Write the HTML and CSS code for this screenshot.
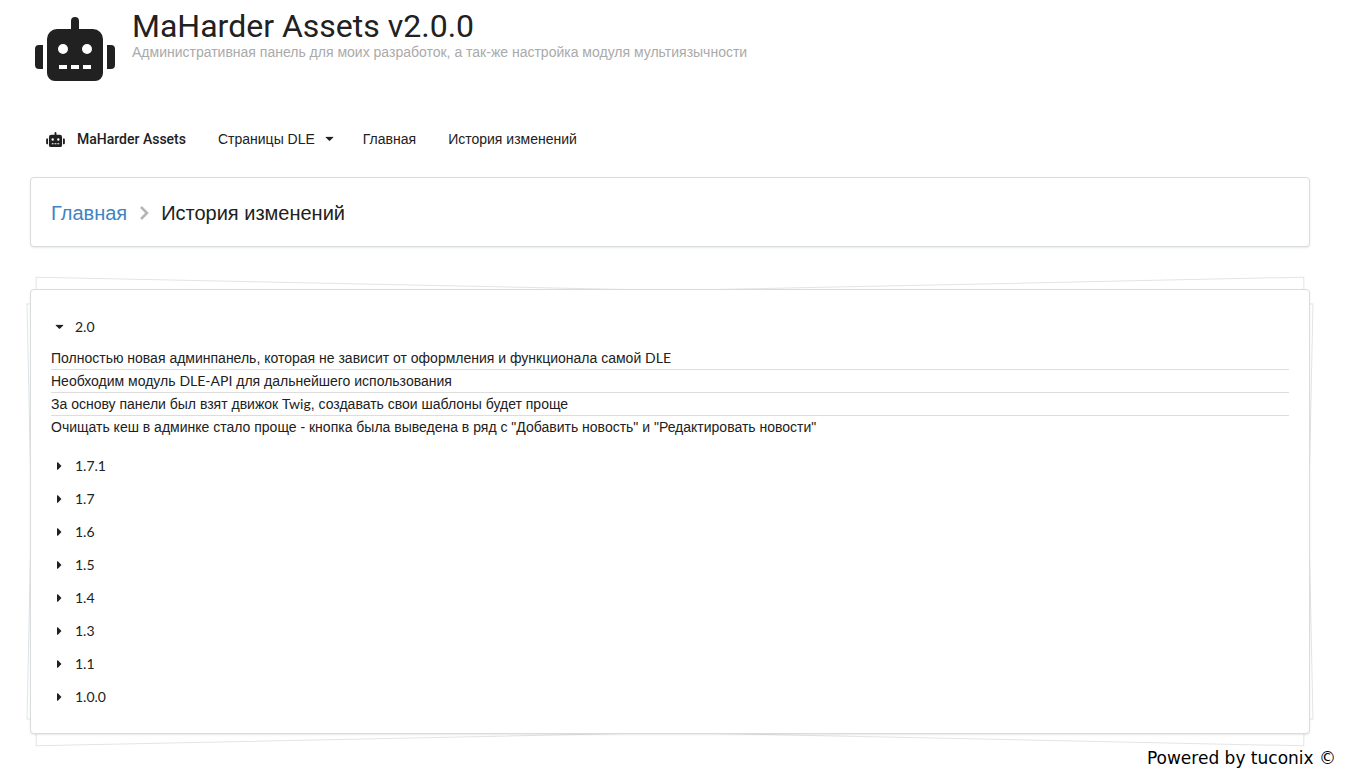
FILE: index.html
```html
<!DOCTYPE html>
<html lang="ru">
  <head>
    <meta charset="UTF-8" />
    <meta name="viewport" content="width=device-width, initial-scale=1.0" />
    <title>MaHarder Assets v2.0.0</title>
    <link rel="stylesheet" href="styles.css">
  </head>
  <body>
    <!-- icons used on the page -->
    <svg class="sprite" aria-hidden="true">
      <symbol id="robot" viewBox="0 0 640 512">
        <path d="M32 224H64V416H32A32 32 0 0 1 0 384V256A32 32 0 0 1 32 224Zm512-48V448a64 64 0 0 1-64 64H160a64 64 0 0 1-64-64V176a80 80 0 0 1 80-80H288V32a32 32 0 0 1 64 0V96H464A80 80 0 0 1 544 176ZM264 256a40 40 0 1 0-40 40A40 40 0 0 0 264 256Zm-8 128H192v32h64Zm96 0H288v32h64ZM456 256a40 40 0 1 0-40 40A40 40 0 0 0 456 256Zm-8 128H384v32h64ZM640 256V384a32 32 0 0 1-32 32H576V224h32A32 32 0 0 1 640 256Z"/>
      </symbol>
      <symbol id="caret" viewBox="0 0 192 512">
        <path d="M0 384.7V127.3c0-17.8 21.5-26.7 34.1-14.1l128.7 128.7c7.8 7.8 7.8 20.5 0 28.3L34.1 398.8C21.5 411.4 0 402.5 0 384.7z"/>
      </symbol>
    </svg>

    <header class="page-header">
      <svg class="logo"><use href="#robot"/></svg>
      <div>
        <h1>MaHarder Assets v2.0.0</h1>
        <p class="sub-header">Административная панель для моих разработок, а так-же настройка модуля мультиязычности</p>
      </div>
    </header>

    <nav class="menu">
      <a class="item brand" href="#"><svg class="brand-icon"><use href="#robot"/></svg>MaHarder Assets</a>
      <button class="item dropdown" type="button">Страницы DLE<svg class="caret down"><use href="#caret"/></svg></button>
      <a class="item" href="#">Главная</a>
      <a class="item" href="#">История изменений</a>
    </nav>

    <div class="segment breadcrumb">
      <a href="#">Главная</a>
      <svg class="divider" viewBox="0 0 10 16"><path d="M2 2l6 6-6 6"/></svg>
      <span>История изменений</span>
    </div>

    <main class="segment piled">
      <details open>
        <summary><svg class="caret"><use href="#caret"/></svg>2.0</summary>
        <ul class="changes">
          <li>Полностью новая админпанель, которая не зависит от оформления и функционала самой <span class="latin">DLE</span></li>
          <li>Необходим модуль <span class="latin">DLE-API</span> для дальнейшего использования</li>
          <li>За основу панели был взят движок <span class="latin">Twig</span>, создавать свои шаблоны будет проще</li>
          <li>Очищать кеш в админке стало проще - кнопка была выведена в ряд с "Добавить новость" и "Редактировать новости"</li>
        </ul>
      </details>
      <details><summary><svg class="caret"><use href="#caret"/></svg>1.7.1</summary></details>
      <details><summary><svg class="caret"><use href="#caret"/></svg>1.7</summary></details>
      <details><summary><svg class="caret"><use href="#caret"/></svg>1.6</summary></details>
      <details><summary><svg class="caret"><use href="#caret"/></svg>1.5</summary></details>
      <details><summary><svg class="caret"><use href="#caret"/></svg>1.4</summary></details>
      <details><summary><svg class="caret"><use href="#caret"/></svg>1.3</summary></details>
      <details><summary><svg class="caret"><use href="#caret"/></svg>1.1</summary></details>
      <details><summary><svg class="caret"><use href="#caret"/></svg>1.0.0</summary></details>
    </main>

    <footer class="footer">Powered by tuconix ©</footer>
  </body>
</html>
```
FILE: styles.css
```css
/* basic styling */
* {
  margin: 0;
  padding: 0;
  box-sizing: border-box;
}
body {
  padding: 0 36px 0 30px;
  font-family: "Liberation Sans", Arial, sans-serif;
  font-size: 14px;
  line-height: 20px;
  background-color: #ffffff;
  color: #212121;
}
a {
  color: #4183c4;
  text-decoration: none;
}
svg {
  flex: none;
  fill: currentColor;
}
.sprite {
  display: none;
}

/* Logo and title */
.page-header {
  display: flex;
  gap: 17px;
  padding: 9px 5px 0;
}
.logo {
  width: 80px;
  height: 64px;
  margin-top: 8px;
}
.page-header h1 {
  font-family: Roboto, sans-serif;
  font-size: 32px;
  font-weight: 400;
  line-height: 34px;
}
.sub-header {
  line-height: 18px;
  color: #aaaaaa;
}

/* Main menu */
.menu {
  display: flex;
  align-items: center;
  margin: 38px 0 18px;
}
.item {
  display: flex;
  align-items: center;
  padding: 10px 16px;
  border: none;
  background: none;
  font: inherit;
  color: #212121;
  cursor: pointer;
}
.item:hover {
  background-color: #f5f5f5;
}
.brand {
  gap: 12px;
  font-family: Roboto, sans-serif;
  font-weight: 500;
}
.brand-icon {
  width: 19px;
  height: 15px;
}

/* Carets of the dropdown and the accordion */
.caret {
  width: 5px;
  height: 14px;
}
.dropdown {
  gap: 12px;
  padding-right: 15px;
}
.caret.down,
details[open] .caret {
  transform: rotate(90deg);
}

/* White boxes */
.segment {
  padding: 20px;
  border: 1px solid #d9dcde;
  border-radius: 4px;
  background-color: #ffffff;
  box-shadow: 0 1px 2px rgba(34, 36, 38, 0.1);
}
.breadcrumb {
  display: flex;
  align-items: center;
  gap: 12px;
  padding: 21px 20px 19px;
  font-size: 20px;
  line-height: 28px;
}
.divider {
  width: 10px;
  height: 16px;
  fill: none;
  stroke: #b5b5b5;
  stroke-width: 2.5;
}

/* Two sheets lying under the box */
.piled {
  position: relative;
  margin: 42px 0 14px;
}
.piled::before,
.piled::after {
  content: "";
  position: absolute;
  z-index: -1;
  inset: 0;
  border: 1px solid #e2e4e5;
  background-color: #ffffff;
  transform: rotate(1.2deg);
}
.piled::before {
  transform: rotate(-1.2deg);
}

/* Change log */
summary {
  display: flex;
  align-items: center;
  gap: 13px;
  padding: 7px 6px 6px;
  list-style: none;
  font-family: Lato, sans-serif;
  cursor: pointer;
}
.changes {
  padding: 4px 0 11px;
  list-style: none;
}
.changes li {
  line-height: 22px;
}
.changes li + li {
  border-top: 1px solid #dddddd;
}
.latin {
  font-family: Lato, sans-serif;
}

.footer {
  margin-right: -26px;
  font-family: "DejaVu Sans", Verdana, sans-serif;
  font-size: 17px;
  text-align: right;
  color: #000000;
}
```
